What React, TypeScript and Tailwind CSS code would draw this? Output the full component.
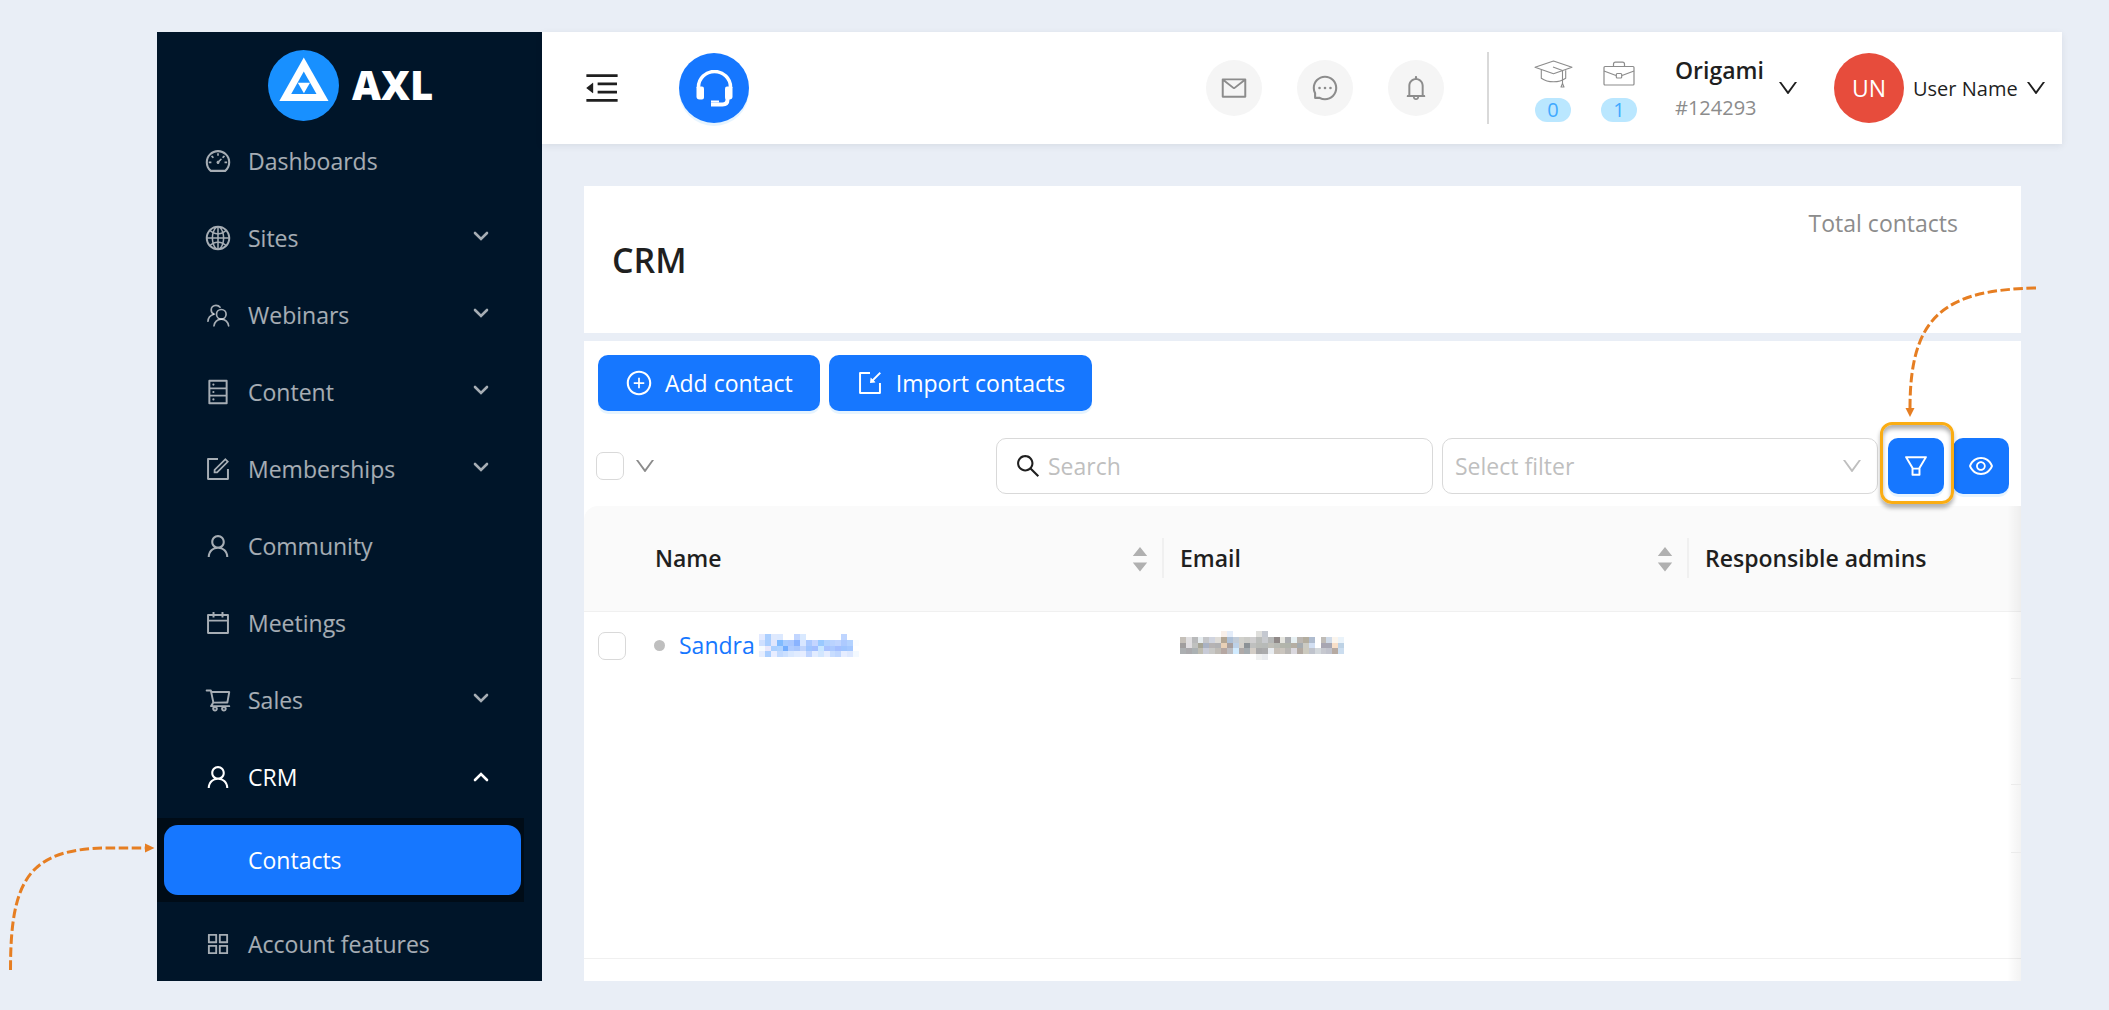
import type { ReactNode } from 'react';
import type { IconType } from 'react-icons';
import {
    AiOutlineAppstore,
    AiOutlineBell,
    AiOutlineCalendar,
    AiOutlineDashboard,
    AiOutlineDatabase,
    AiOutlineDown,
    AiOutlineEye,
    AiOutlineFilter,
    AiOutlineForm,
    AiOutlineGlobal,
    AiOutlineImport,
    AiOutlineMail,
    AiOutlineMenuFold,
    AiOutlineMessage,
    AiOutlinePlusCircle,
    AiOutlineSearch,
    AiOutlineShoppingCart,
    AiOutlineUser,
} from 'react-icons/ai';

// Two people, the second one standing behind on the left
function PeopleIcon() {
    return (
        <svg viewBox="0 0 25 25" className="w-[25px] h-[25px]" fill="none" stroke="currentColor" strokeWidth="1.7" strokeLinecap="round">
            <circle cx="15.3" cy="11.3" r="4.8" />
            <path d="M8 22.8c.3-3.8 3.3-6.7 7.3-6.7s7 2.9 7.300 6.7" />
            <path d="M14 4.3c-.9-1.3-2.4-1.9-4-1.900-2.8 0-4.8 2-4.8 4.500 0 1.9 1 3.4 2.6 4.2" />
            <path d="M7.8 11.2C4.3 12.2 2.2 14.7 2 18.2" />
        </svg>
    );
}

function HeadsetIcon() {
    return (
        <svg viewBox="0 0 37 37" className="w-[37px] h-[37px]" fill="none">
            <path d="M2.5 18v-1a16 15.5 0 0 1 32 0v1" stroke="white" strokeWidth="3.5" />
            <path d="M.5 17.5q0-1 1-1h4.500q2 0 2 2v9q0 2-2 2H3.5q-3 0-3-3z" fill="white" />
            <path d="M36.5 17.5q0-1-1-1H31q-2 0-2 2v9q0 2 2 2h2.500q3 0 3-3z" fill="white" />
            <path d="M31.5 28v1.500q0 5-5 5H15" stroke="white" strokeWidth="4" />
            <path d="M15 31.5h8" stroke="white" strokeWidth="2" />
        </svg>
    );
}

function CapIcon() {
    return (
        <svg viewBox="0 0 39 28" className="w-[39px] h-[28px]" fill="none" stroke="#8c8c8c" strokeWidth="1.1" strokeLinejoin="round">
            <path d="M19.5 1 38 7.2 19.5 13.8 1 7.2z" />
            <path d="M7.3 9.8v8.4c3.4 2.4 7.4 3.6 12.2 3.6s8.8-1.2 12.2-3.6v-8" />
            <path d="m19 7 9.5 3.600V24" />
            <path d="m28.5 23.5-1.5 3.500h3z" />
        </svg>
    );
}

function CaseIcon() {
    return (
        <svg viewBox="0 0 32 26" className="w-[32px] h-[26px]" fill="none" stroke="#8c8c8c" strokeWidth="1.2">
            <rect x="1" y="5.5" width="30" height="18.5" rx="1" />
            <path d="M10.5 5.5V3.2q0-2 2-2h7q2 0 2 2v2.3" />
            <path d="m1 10 12 4.500M31 10l-12 4.500" />
            <rect x="13.3" y="12.5" width="5.4" height="4.5" rx="1" />
        </svg>
    );
}

function Caret({ open }: { open: boolean }) {
    return (
        <svg viewBox="0 0 16 10" className="w-4 h-[10px]" fill="none" stroke="currentColor" strokeWidth="2.6" strokeLinecap="round">
            <path d={open ? 'M2 8l6-6 6 6' : 'M2 2l6 6 6-6'} />
        </svg>
    );
}

function Sorter() {
    return (
        <svg viewBox="0 0 16 26" className="w-4 h-[26px]" fill="#b0b0b0">
            <path d="M8 1l7.2 9H.8zM8 25.5l7.2-9H.8z" />
        </svg>
    );
}

// Blocks of a pixelated value, one row of colours per line
function Mosaic({ rows }: { rows: string[] }) {
    const cells = rows.map((row) => row.split(' '));
    const cols = Math.max(...cells.map((row) => row.length));
    return (
        <svg viewBox={`0 0 ${cols} ${rows.length}`} width={Math.round(cols * 5.87)} height={Math.round(rows.length * 5.87)} shapeRendering="crispEdges" preserveAspectRatio="none" aria-hidden="true">
            {cells.map((row, y) =>
                row.map((color, x) => (color === '-' ? null : <rect key={`${x}-${y}`} x={x} y={y} width="1" height="1" fill={`#${color}`} />))
            )}
        </svg>
    );
}

const surname = [
    'e3eaff abcfff dfe9fd dce9ff - - c2d6ff d9e9ff - - - - - - bfd5ff - -',
    'cfe0ff abcfff e0e6fc 80bbff a8ccff a9c7ff 8ab3ff d8e6ff aac8ff c4d5ff 99c9ff b2d2ff bad3ff c0d5ff adcaff b3d2ff fbfdff',
    'f7fcff e9e8fb abd0ff b0d3ff 74aeff b0ccff abc8fd c0d4fc 9fc5ff a3bfff c8e6ff a9c3ff abc9ff a4bfff 9fc5ff a5c8ff -',
    'e6eeff abcfff e8edff c2daff cce0ff d9e8ff e1ecff e6edff bfd4ff e2ecff d2e6ff e6edff c8ddff c0d7ff e6edff dde8ff f3f9ff',
];

const address = [
    '- - - - - - - f8efe9 e3ecf9 - - - - dfdfdc c4c8d0 - - - - - - - - - - - - -',
    'c5c0b9 e0dfe1 b9babb e7edf0 c5c6c9 d0d4df dfdcd7 b3a694 adc0d7 c2ccd8 d1d1cc cbcbc7 d0cfd0 bbbdbb c8cace b6b8b7 908988 e5e5df acaeb1 e7f0f3 bbb6b1 b3ad9f afbccf - c0bcb7 cfdae8 fbf5ed eaf3fa',
    'a09e9e e0dee1 bfc1bf a6a596 a9b2c3 b6b3b3 b1b1b3 e8d0b6 a79f9f bdd1e7 d4d0c9 8c9296 bfc0bf b9bbb7 b7bab8 c0bfb8 b8bab4 b3b5ab b0b4ab b5aea3 a5abaf cbcac2 d2dff2 - a8a6b2 a7a7b3 f8dfc8 bdd2e5',
    'acafb1 aaa9ac abb1b3 bebcb0 c8cbd7 c8c8c6 bfbbb5 b5a7a2 bbbcc1 d1ebff b0aaa8 a4abaf d3cdc6 a8a8a9 ababac e8ecf0 c7c0b8 cac5be b8b6b3 dad8de b2a9a1 cccabf bfc3cc d3d8dc c6c8cf c0c2cc b6aaa2 cbddef',
    '- - - - - - - - - - - - - f0f1f1 e9ebee - - - - - - - - - - - - -',
];

type NavItem = { label: string; icon: IconType | (() => ReactNode); group?: boolean };

const navItems: NavItem[] = [
    { label: 'Dashboards', icon: AiOutlineDashboard },
    { label: 'Sites', icon: AiOutlineGlobal, group: true },
    { label: 'Webinars', icon: PeopleIcon, group: true },
    { label: 'Content', icon: AiOutlineDatabase, group: true },
    { label: 'Memberships', icon: AiOutlineForm, group: true },
    { label: 'Community', icon: AiOutlineUser },
    { label: 'Meetings', icon: AiOutlineCalendar },
    { label: 'Sales', icon: AiOutlineShoppingCart, group: true },
];

function NavLink({ item, open = false }: { item: NavItem; open?: boolean }) {
    const Icon = item.icon;
    return (
        <a href="#" className={`flex items-center h-[70px] pl-[47px] pr-[53px] text-[23px] ${open ? 'text-white' : 'text-white/65'}`}>
            <span className="w-7 mr-4 flex justify-center">
                <Icon size={28} />
            </span>
            <span className="flex-1">{item.label}</span>
            {item.group && (
                <span className={open ? '' : 'pb-1'}>
                    <Caret open={open} />
                </span>
            )}
        </a>
    );
}

function Sidebar() {
    return (
        <aside className="w-[385px] shrink-0 bg-[#001529]">
            <div className="h-[94px] pt-[18px] pl-[111px] flex items-start gap-[13px]">
                <svg viewBox="0 0 71 71" className="w-[71px] h-[71px]">
                    <circle cx="35.5" cy="35.5" r="35.5" fill="#1890ff" />
                    <path d="M35.8 7.5 60.5 51H11.3z" fill="white" />
                    <path d="M35.8 21.5 48.5 44H23.2z" fill="#1890ff" />
                    <path d="M29.8 32.8h12.2l-6.1 10.4z" fill="white" />
                </svg>
                <span className="text-[40px] leading-[70px] font-extrabold text-white">AXL</span>
            </div>
            <nav className="flex flex-col gap-[7px]">
                {navItems.map((item) => (
                    <NavLink key={item.label} item={item} />
                ))}
                <NavLink item={{ label: 'CRM', icon: AiOutlineUser, group: true }} open />
                <div className="relative mr-[18px] -mt-px py-[7px] pl-[7px] pr-[3px] bg-[#000c17]">
                    <a href="#" className="flex items-center h-[70px] pl-[84px] rounded-[14px] bg-[#1677ff] text-[23px] text-white">
                        Contacts
                    </a>
                    <svg viewBox="0 0 157 134" className="absolute right-full top-[22px] w-[157px] h-[134px]" fill="none" aria-hidden="true">
                        <path d="M10.5 130C10.5 40 28 8 110 8h36" stroke="#e67e22" strokeWidth="3" strokeDasharray="9.5 3.5" />
                        <path d="M145 3.5v9l9.500-4.500z" fill="#e67e22" />
                    </svg>
                </div>
                <NavLink item={{ label: 'Account features', icon: AiOutlineAppstore }} />
            </nav>
        </aside>
    );
}

function RoundButton({ label, children }: { label: string; children: ReactNode }) {
    return (
        <button aria-label={label} className="w-14 h-14 rounded-full bg-[#f5f5f5] text-[#8c8c8c] flex items-center justify-center">
            {children}
        </button>
    );
}

function Counter({ value, children }: { value: number; children: ReactNode }) {
    return (
        <div className="w-[38px] flex flex-col items-center gap-2.5">
            <div className="h-7 flex items-center">{children}</div>
            <span className="w-9 h-6 rounded-full bg-[#bae7ff] text-[#40a9ff] text-[20px] leading-6 text-center">{value}</span>
        </div>
    );
}

function Header() {
    return (
        <header className="relative h-[112px] pl-10 pr-[14px] flex items-center bg-white shadow-[0_2px_7px_rgba(0,21,41,0.08)]">
            <button aria-label="Collapse menu" className="text-[#1f1f1f]">
                <AiOutlineMenuFold size={40} />
            </button>
            <button aria-label="Support" className="ml-[57px] w-[70px] h-[70px] rounded-full bg-[#1677ff] shadow-[0_3px_0_rgba(5,145,255,0.1)] flex items-center justify-center">
                <HeadsetIcon />
            </button>

            <div className="ml-auto flex items-center gap-[35px]">
                <RoundButton label="Mail">
                    <AiOutlineMail size={28} />
                </RoundButton>
                <RoundButton label="Messages">
                    <AiOutlineMessage size={28} />
                </RoundButton>
                <RoundButton label="Notifications">
                    <AiOutlineBell size={28} />
                </RoundButton>
            </div>
            <div className="ml-[43px] w-0.5 h-[72px] bg-[#d9d9d9]" />
            <div className="ml-[45px] pt-1.5 flex gap-7">
                <Counter value={0}>
                    <CapIcon />
                </Counter>
                <Counter value={1}>
                    <CaseIcon />
                </Counter>
            </div>
            <button className="ml-[37px] flex items-center gap-3 text-left text-[#1f1f1f]">
                <span className="w-[89px] pt-0.5 whitespace-nowrap">
                    <span className="block text-[23px] leading-[37px] font-semibold">Origami</span>
                    <span className="block text-[20px] leading-[37px] text-[#8c8c8c]">#124293</span>
                </span>
                <AiOutlineDown size={24} />
            </button>
            <button className="ml-[34px] flex items-center text-[#1f1f1f]">
                <span className="w-[70px] h-[70px] rounded-full bg-[#e74c3c] text-white text-[23px] flex items-center justify-center">UN</span>
                <span className="ml-[9px] mr-2 pt-0.5 w-[103px] whitespace-nowrap text-left text-[20px]">User Name</span>
                <AiOutlineDown size={24} />
            </button>
        </header>
    );
}

const primaryButton = 'h-14 rounded-[10px] bg-[#1677ff] text-white text-[23px] flex items-center shadow-[0_3px_0_rgba(5,145,255,0.1)]';
const checkbox = 'block w-7 h-7 appearance-none rounded-[7px] border border-[#d9d9d9] bg-white';
const headCell = 'relative h-[106px] px-4 text-left text-[23px] font-semibold bg-[#fafafa] border-b border-[#f0f0f0]';

function Toolbar() {
    return (
        <div className="px-3 flex items-center">
            <input type="checkbox" aria-label="Select all" className={checkbox} />
            <button aria-label="Selection options" className="ml-[9px] text-[#8c8c8c]">
                <AiOutlineDown size={24} />
            </button>
            <div className="ml-auto flex">
                <label className="w-[437px] h-14 pl-[17px] flex items-center gap-1.5 rounded-[10px] border border-[#d9d9d9] text-[#1f1f1f]">
                    <AiOutlineSearch size={28} />
                    <input type="text" aria-label="Search" placeholder="Search" className="flex-1 min-w-0 bg-transparent text-[23px] outline-none placeholder:text-[#bfbfbf]" />
                </label>
                <div className="relative ml-[9px] w-[436px]">
                    <select aria-label="Select filter" defaultValue="" className="w-full h-14 px-3 appearance-none rounded-[10px] border border-[#d9d9d9] bg-white text-[23px] text-[#bfbfbf]">
                        <option value="">Select filter</option>
                    </select>
                    <AiOutlineDown size={24} className="absolute right-3.5 top-4 text-[#bfbfbf] pointer-events-none" />
                </div>
                <div className="relative z-10 ml-2.5">
                    <button aria-label="Filters" className={`${primaryButton} w-14 justify-center`}>
                        <AiOutlineFilter size={28} />
                    </button>
                    <span className="absolute -top-4 -left-2 -right-2.5 -bottom-2.5 rounded-xl border-3 border-[#faad14] shadow-[0_4px_4px_rgba(0,0,0,0.3),inset_0_4px_4px_rgba(0,0,0,0.3)] pointer-events-none" />
                    <svg viewBox="0 0 136 136" className="absolute left-[14px] bottom-[76px] w-[136px] h-[136px] pointer-events-none" fill="none" aria-hidden="true">
                        <path d="M134 6C43 8 8 33 8 126" stroke="#e67e22" strokeWidth="3" strokeDasharray="9.5 3.5" />
                        <path d="M3.5 126h9L8 135z" fill="#e67e22" />
                    </svg>
                </div>
                <button aria-label="Columns" className={`${primaryButton} ml-[9px] w-14 justify-center`}>
                    <AiOutlineEye size={28} />
                </button>
            </div>
        </div>
    );
}

function ContactsTable() {
    return (
        <div className="relative mt-3 flex-1 flex flex-col">
            <div className="flex-1 mb-[22px] border-b border-[#f0f0f0]">
                <table className="w-full table-fixed border-separate border-spacing-0">
                    <colgroup>
                        <col className="w-[55px]" />
                        <col className="w-[525px]" />
                        <col className="w-[525px]" />
                        <col />
                    </colgroup>
                    <thead>
                        <tr>
                            <th className={`${headCell} rounded-tl-[14px]`} />
                            {['Name', 'Email'].map((title) => (
                                <th key={title} className={headCell}>
                                    <div className="flex items-center justify-between">
                                        {title}
                                        <button aria-label={`Sort by ${title}`}>
                                            <Sorter />
                                        </button>
                                    </div>
                                    <span className="absolute right-0 top-8 w-0.5 h-10 bg-[#f0f0f0]" />
                                </th>
                            ))}
                            <th className={headCell}>Responsible admins</th>
                        </tr>
                    </thead>
                    <tbody>
                        <tr className="h-[67px] text-[23px]">
                            <td className="pl-3.5">
                                <input type="checkbox" aria-label="Select Sandra" className={checkbox} />
                            </td>
                            <td className="px-[15px]">
                                <div className="flex items-center">
                                    <span className="w-[11px] h-[11px] mr-3.5 rounded-full bg-[#bfbfbf]" />
                                    <a href="#" className="flex items-center gap-1 text-[#1677ff]">
                                        Sandra
                                        <Mosaic rows={surname} />
                                    </a>
                                </div>
                            </td>
                            <td className="px-4">
                                <Mosaic rows={address} />
                            </td>
                            <td />
                        </tr>
                    </tbody>
                </table>
            </div>
            {/* scroll shadow with the ends of the row lines */}
            <div className="absolute inset-y-0 right-0 w-[14px] flex flex-col items-end bg-linear-to-l from-black/5 to-transparent pointer-events-none">
                <div className="w-2.5 h-[173px] border-b border-[#ebebeb]" />
                <div className="w-2.5 h-[106px] border-b border-[#ebebeb]" />
                <div className="w-2.5 h-[68px] border-b border-[#ebebeb]" />
            </div>
        </div>
    );
}

export default function App() {
    return (
        <div className="min-h-screen pt-8 pb-[29px] pl-[157px] pr-[47px] flex bg-[#e9eef6] text-[#1f1f1f] font-['Open_Sans','Noto_Sans',sans-serif]">
            <Sidebar />
            <div className="flex-1 min-w-0 flex flex-col">
                <Header />
                <main className="flex-1 pt-[42px] pl-[42px] pr-[41px] flex flex-col gap-2">
                    <section className="h-[147px] pl-7 pr-[63px] flex justify-between bg-white">
                        <h1 className="self-center pt-0.5 text-[34px] font-semibold">CRM</h1>
                        <span className="mt-5 text-[23px] text-[#8c8c8c]">Total contacts</span>
                    </section>
                    <section className="flex-1 pt-3.5 flex flex-col bg-white">
                        <div className="px-3.5 mb-[27px] flex gap-[9px]">
                            <button className={`${primaryButton} px-[27px] gap-3`}>
                                <AiOutlinePlusCircle size={28} />
                                Add contact
                            </button>
                            <button className={`${primaryButton} px-[27px] gap-3`}>
                                <AiOutlineImport size={28} />
                                Import contacts
                            </button>
                        </div>
                        <Toolbar />
                        <ContactsTable />
                    </section>
                </main>
            </div>
        </div>
    );
}
